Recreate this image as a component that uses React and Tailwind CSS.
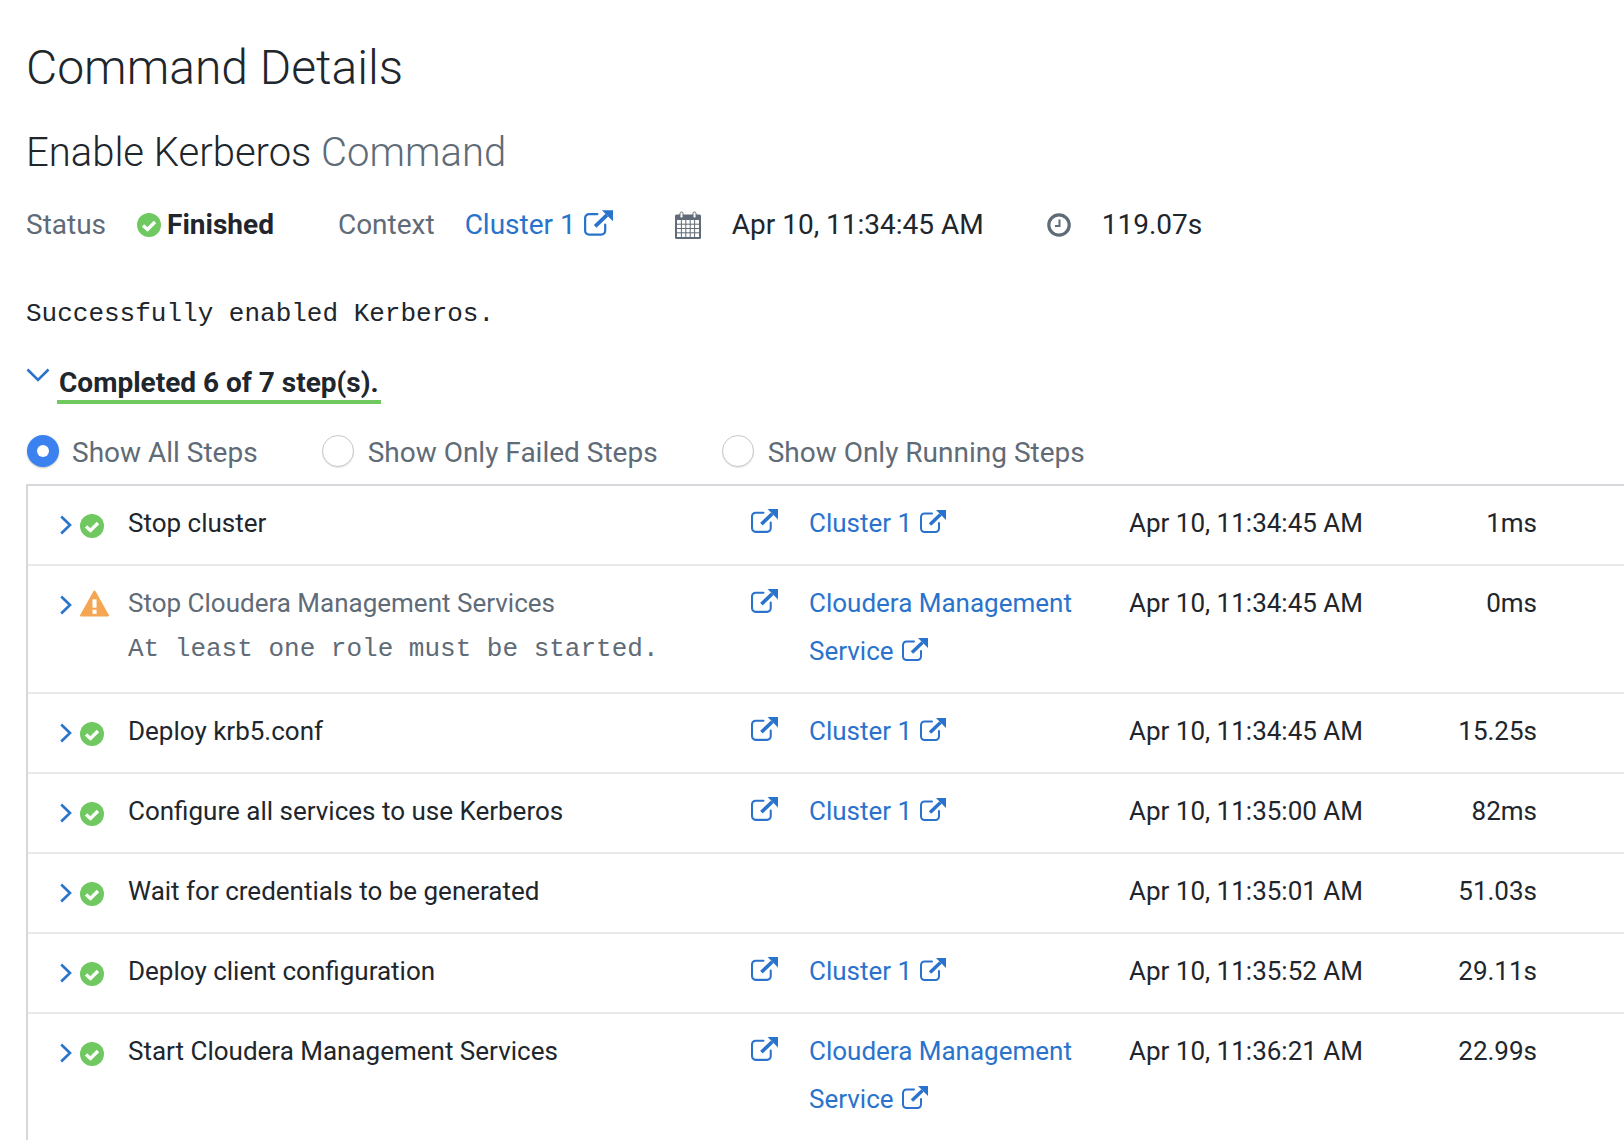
function Ext({ className = "w-[27px] h-[24px] mt-[1px]" }) {
  return (
    <svg viewBox="0 0 26 23" className={`inline-block shrink-0 text-[#2a73cc] ${className}`} fill="none">
      <path d="M12 3.500H4.500A3.500 3.500 0 0 0 1 7V18.500A3.500 3.500 0 0 0 4.500 22H15.500A3.500 3.500 0 0 0 19 18.500V13" stroke="currentColor" strokeWidth="2" strokeLinecap="round" />
      <path d="M10 14.500L20.500 4.500" stroke="currentColor" strokeWidth="3.400" />
      <path d="M16 0H26V10Z" fill="currentColor" />
    </svg>
  );
}

function Check({ className = "" }) {
  return (
    <svg viewBox="0 0 24 24" className={`w-6 h-6 shrink-0 ${className}`}>
      <circle cx="12" cy="12" r="12" fill="#6fc960" />
      <path d="M6 12.500L10.500 16.500L18 9" fill="none" stroke="#fff" strokeWidth="3.400" />
    </svg>
  );
}

function Warn() {
  return (
    <svg viewBox="0 0 28 26" className="w-[29px] h-[27px] shrink-0 -mt-[4px]">
      <path d="M14 1.500L27 24.500H1Z" fill="#f4a653" stroke="#f4a653" strokeWidth="2" strokeLinejoin="round" />
      <rect x="12" y="9" width="4" height="8" fill="#fff" />
      <rect x="12" y="19" width="4" height="4" fill="#fff" />
    </svg>
  );
}

function Chevron() {
  return (
    <svg viewBox="0 0 12 20" className="w-3 h-5 shrink-0">
      <path d="M1.200 1.500L10 10L1.200 18.500" fill="none" stroke="#2a73cc" strokeWidth="2.600" />
    </svg>
  );
}

function Calendar() {
  return (
    <svg viewBox="0 0 26 28" className="w-[26px] h-7 shrink-0">
      <path d="M1.500 3.500H24.500A1.500 1.500 0 0 1 26 5V26.500A1.500 1.500 0 0 1 24.500 28H1.500A1.500 1.500 0 0 1 0 26.500V5A1.500 1.500 0 0 1 1.500 3.500Z" fill="#5f6b76" />
      <rect x="5" y="1" width="3" height="6" rx="1.500" fill="#fff" stroke="#5f6b76" />
      <rect x="18" y="1" width="3" height="6" rx="1.500" fill="#fff" stroke="#5f6b76" />
      <rect x="2" y="9" width="22" height="17" fill="#fff" />
      <path d="M2 13.200H24M2 17.500H24M2 21.800H24M6.400 9V26M10.800 9V26M15.200 9V26M19.600 9V26" stroke="#5f6b76" strokeWidth="1" />
    </svg>
  );
}

function Clock() {
  return (
    <svg viewBox="0 0 24 24" className="w-6 h-6 shrink-0">
      <circle cx="12" cy="12" r="10.200" fill="none" stroke="#5f6b76" strokeWidth="3.200" />
      <path d="M12.500 6.500V13H8" fill="none" stroke="#5f6b76" strokeWidth="2" />
    </svg>
  );
}

function Radio({ checked, label, className = "" }) {
  return (
    <div className={`flex items-center ${className}`}>
      {checked ? (
        <span className="w-8 h-8 ml-[1px] rounded-full bg-[#3b82f0] flex items-center justify-center shadow-[0_1px_2px_rgba(0,0,0,0.25)] -mt-1">
          <span className="w-3 h-3 rounded-full bg-white" />
        </span>
      ) : (
        <span className="w-8 h-8 rounded-full border border-[#c9c9c9] bg-white shadow-[0_1px_1px_rgba(0,0,0,0.1)] -mt-1" />
      )}
      <span className={`text-[#5f6b76] ${checked ? "ml-[13px]" : "ml-[14px]"}`}>{label}</span>
    </div>
  );
}

const rows = [
  { name: "Stop cluster", link: ["Cluster 1"], date: "Apr 10, 11:34:45 AM", dur: "1ms" },
  { name: "Stop Cloudera Management Services", warn: true, msg: "At least one role must be started.", link: ["Cloudera Management", "Service"], date: "Apr 10, 11:34:45 AM", dur: "0ms" },
  { name: "Deploy krb5.conf", link: ["Cluster 1"], date: "Apr 10, 11:34:45 AM", dur: "15.25s" },
  { name: "Configure all services to use Kerberos", link: ["Cluster 1"], date: "Apr 10, 11:35:00 AM", dur: "82ms" },
  { name: "Wait for credentials to be generated", date: "Apr 10, 11:35:01 AM", dur: "51.03s" },
  { name: "Deploy client configuration", link: ["Cluster 1"], date: "Apr 10, 11:35:52 AM", dur: "29.11s" },
  { name: "Start Cloudera Management Services", link: ["Cloudera Management", "Service"], date: "Apr 10, 11:36:21 AM", dur: "22.99s", last: true },
];

function Row({ r }) {
  return (
    <div className={`flex pt-[13px] pb-[17px] ${r.last ? "" : "border-b-2 border-[#e9e9ea]"}`}>
      <div className="w-[100px] shrink-0 flex items-start pl-[32px] pt-[16px]">
        <Chevron />
        <span className="ml-[8px] -mt-[1px]">{r.warn ? <Warn /> : <Check />}</span>
      </div>
      <div className={`w-[623px] shrink-0 ${r.warn ? "text-[#5f6b76]" : ""}`}>
        <div className="leading-[48px]">{r.name}</div>
        {r.msg && <div className="font-['Liberation_Mono',monospace] text-[26px] leading-[40px] text-[#5f6b76] mt-[2px]">{r.msg}</div>}
      </div>
      <div className="w-[58px] shrink-0">{r.link && <Ext />}</div>
      <div className="w-[320px] shrink-0 text-[#2a73cc] leading-[48px]">
        {r.link && r.link.map((l, i) => (
          <div key={l} className="flex items-center">
            {l}
            {i === r.link.length - 1 && <Ext className="ml-[8px] -mt-[4px] w-[26px] h-[23px]" />}
          </div>
        ))}
      </div>
      <div className="w-[270px] shrink-0 leading-[48px]">{r.date}</div>
      <div className="w-[138px] shrink-0 text-right leading-[48px]">{r.dur}</div>
    </div>
  );
}

export default function App() {
  return (
    <div className="w-[1624px] h-[1140px] overflow-hidden bg-white font-['Roboto',sans-serif] text-[#20262c] text-[27px] pl-[26px] pt-[34px] flex flex-col">
      <h1 className="text-[48px] leading-[68px] font-light">Command Details</h1>
      <h2 className="text-[40px] leading-[56px] font-light mt-[23px]">
        Enable Kerberos <span className="text-[#5f6b76]">Command</span>
      </h2>
      <div className="flex items-center h-[40px] mt-[24px] text-[28px]">
        <span className="text-[#5f6b76]">Status</span>
        <Check className="ml-[31px]" />
        <span className="font-bold ml-[6px]">Finished</span>
        <span className="text-[#5f6b76] ml-[64px]">Context</span>
        <span className="text-[#2a73cc] ml-[30px]">Cluster 1</span>
        <Ext className="ml-[8px] -mt-[5px] w-[29px] h-[26px]" />
        <span className="ml-[62px]"><Calendar /></span>
        <span className="ml-[31px]">Apr 10, 11:34:45 AM</span>
        <span className="ml-[63px]"><Clock /></span>
        <span className="ml-[31px]">119.07s</span>
      </div>
      <div className="font-['Liberation_Mono',monospace] text-[26px] leading-[40px] mt-[49px]">Successfully enabled Kerberos.</div>
      <div className="flex items-start mt-[29px]">
        <svg viewBox="0 0 24 14" className="w-6 h-[14px] shrink-0 mt-[5px]">
          <path d="M1.500 1.500L12 12L22.500 1.500" fill="none" stroke="#2a73cc" strokeWidth="2.600" />
        </svg>
        <div className="ml-[7px] text-[28px] font-bold leading-[40px] border-b-4 border-[#6fc960] px-[2px] h-[41px]">Completed 6 of 7 step(s).</div>
      </div>
      <div className="flex items-center h-[40px] mt-[29px] text-[28px]">
        <Radio checked label="Show All Steps" />
        <Radio label="Show Only Failed Steps" className="ml-[64px]" />
        <Radio label="Show Only Running Steps" className="ml-[64px]" />
      </div>
      <div className="mt-[11px] flex-1 border-t-2 border-l-2 border-[#d7d7db] text-[26px]">
        {rows.map((r) => <Row key={r.name} r={r} />)}
      </div>
    </div>
  );
}
